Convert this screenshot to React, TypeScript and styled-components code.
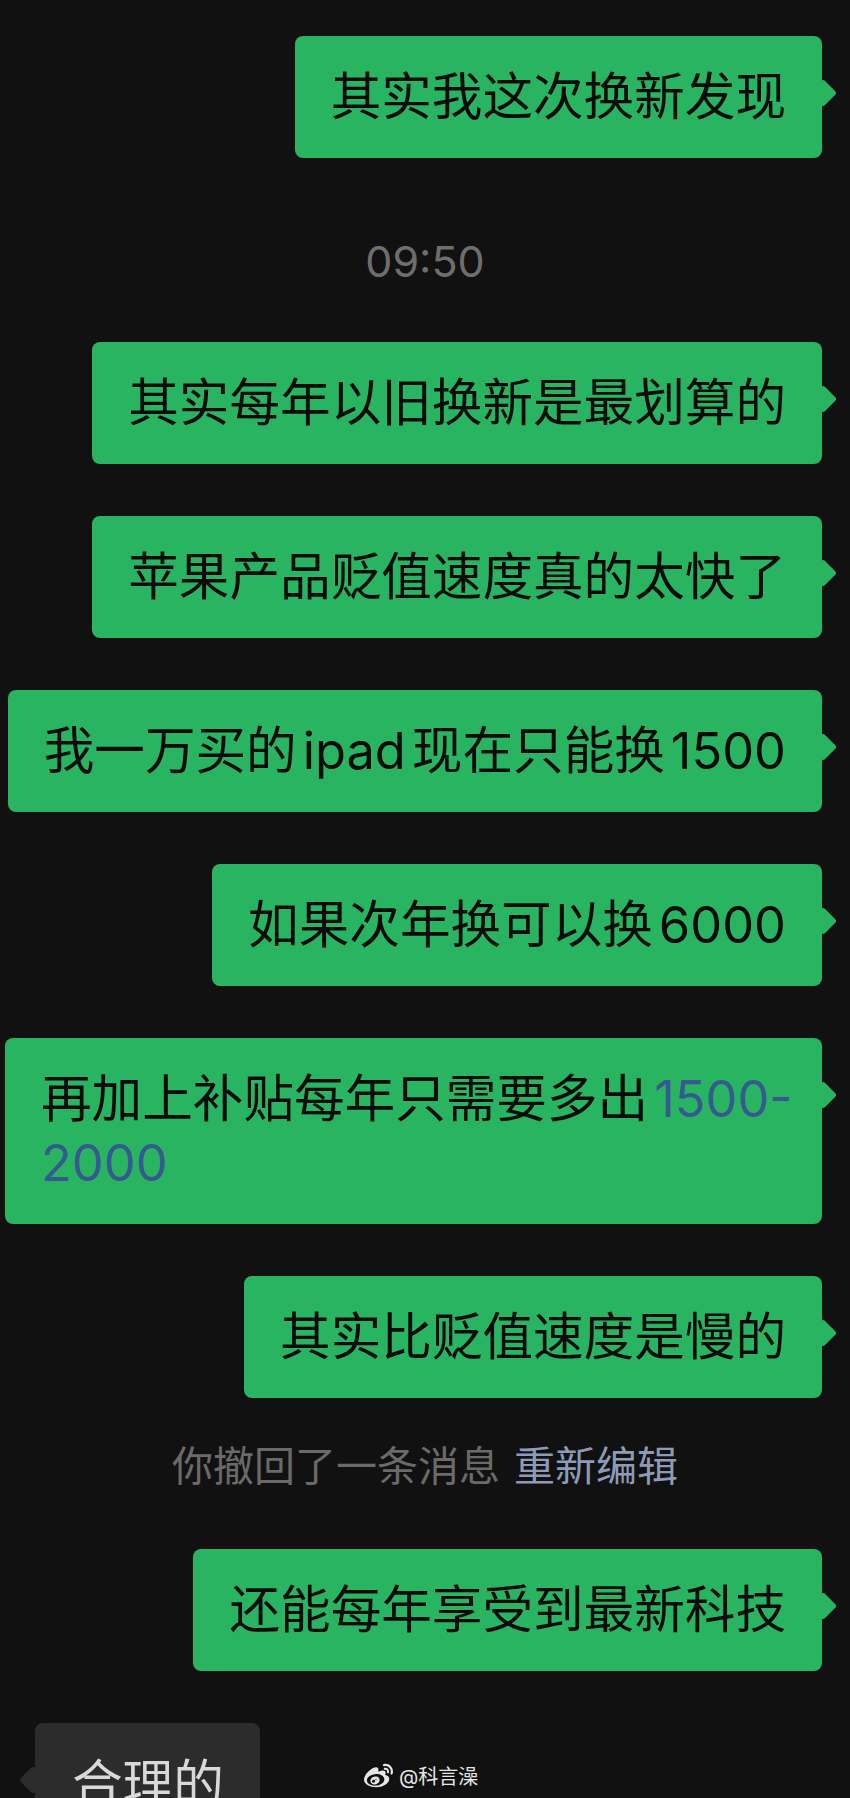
import React from "react";
import styled, { createGlobalStyle, css } from "styled-components";
import { FaWeibo } from "react-icons/fa";

const GlobalStyle = createGlobalStyle`
  html, body {
    margin: 0;
    padding: 0;
    background: #111111;
    overflow: hidden;
  }
`;

const Screen = styled.div`
  position: relative;
  width: 850px;
  height: 1798px;
  overflow: hidden;
  background: #111111;
  font-family: "Inter", "Noto Sans CJK SC", sans-serif;
`;

const Thread = styled.div`
  display: flex;
  flex-direction: column;
  gap: 52px;
  padding-top: 36px;
`;

const Row = styled.div<{ $side: "left" | "right" }>`
  display: flex;
  justify-content: ${(p) => (p.$side === "right" ? "flex-end" : "flex-start")};
  padding: ${(p) => (p.$side === "left" ? "0 0 0 35px" : "0 28px 0 0")};
`;

const Bubble = styled.div<{ $side: "left" | "right"; $width?: number }>`
  position: relative;
  flex-shrink: 0;
  box-sizing: border-box;
  padding: 29px 36px;
  border-radius: 8px;
  font-size: 50.6px;
  line-height: 64px;
  white-space: nowrap;
  ${(p) => (p.$width ? `width: ${p.$width}px;` : "")}
  ${(p) =>
    p.$side === "right"
      ? css`
          background: #29b462;
          color: #0b0b0b;
        `
      : css`
          background: #2c2c2c;
          color: #d9d9d9;
          padding-left: 37px;
        `}

  &::after {
    content: "";
    position: absolute;
    top: 47px;
    width: 20px;
    height: 20px;
    border-radius: 3px;
    transform: rotate(45deg);
    background: inherit;
    ${(p) => (p.$side === "right" ? "right: -11px;" : "left: -12px;")}
  }
`;

const Latin = styled.span<{ $link?: boolean; $before?: boolean; $after?: boolean }>`
  margin-left: ${(p) => (p.$before ? "6px" : "0")};
  margin-right: ${(p) => (p.$after ? "6px" : "0")};
  color: ${(p) => (p.$link ? "#365a8f" : "inherit")};
`;

const Timestamp = styled.div`
  padding: 26px 0 4px;
  text-align: center;
  font-size: 43px;
  line-height: 50px;
  color: #6e6e6e;
`;

const RecallNote = styled.div`
  padding-bottom: 15px;
  text-align: center;
  font-size: 41px;
  line-height: 32px;
  color: #6a6a6a;
`;

const RecallLink = styled.span`
  margin-left: 14px;
  color: #8e9bb8;
`;

const Watermark = styled.div`
  position: absolute;
  left: 364px;
  top: 1762px;
  display: flex;
  align-items: center;
  gap: 6px;
  color: #e6e6e6;
  font-size: 20px;
  line-height: 28px;
`;

type Msg =
  | { kind: "out"; body: React.ReactNode; width?: number }
  | { kind: "in"; body: React.ReactNode }
  | { kind: "time"; text: string }
  | { kind: "recall" };

const messages: Msg[] = [
  { kind: "out", body: "其实我这次换新发现" },
  { kind: "time", text: "09:50" },
  { kind: "out", body: "其实每年以旧换新是最划算的" },
  { kind: "out", body: "苹果产品贬值速度真的太快了" },
  {
    kind: "out",
    body: (
      <>
        我一万买的<Latin $before $after>ipad</Latin>现在只能换<Latin $before>1500</Latin>
      </>
    ),
  },
  {
    kind: "out",
    body: (
      <>
        如果次年换可以换<Latin $before>6000</Latin>
      </>
    ),
  },
  {
    kind: "out",
    width: 817,
    body: (
      <>
        再加上补贴每年只需要多出<Latin $link $before>1500-</Latin>
        <br />
        <Latin $link>2000</Latin>
      </>
    ),
  },
  { kind: "out", body: "其实比贬值速度是慢的" },
  { kind: "recall" },
  { kind: "out", body: "还能每年享受到最新科技" },
  { kind: "in", body: "合理的" },
];

export default function App() {
  return (
    <>
      <GlobalStyle />
      <Screen>
        <Thread>
          {messages.map((m, i) => {
            if (m.kind === "time") return <Timestamp key={i}>{m.text}</Timestamp>;
            if (m.kind === "recall")
              return (
                <RecallNote key={i}>
                  你撤回了一条消息<RecallLink>重新编辑</RecallLink>
                </RecallNote>
              );
            const side = m.kind === "out" ? "right" : "left";
            return (
              <Row key={i} $side={side}>
                <Bubble $side={side} $width={m.kind === "out" ? m.width : undefined}>
                  {m.body}
                </Bubble>
              </Row>
            );
          })}
        </Thread>
        <Watermark>
          <FaWeibo size={29} />
          <span>@科言澡</span>
        </Watermark>
      </Screen>
    </>
  );
}
